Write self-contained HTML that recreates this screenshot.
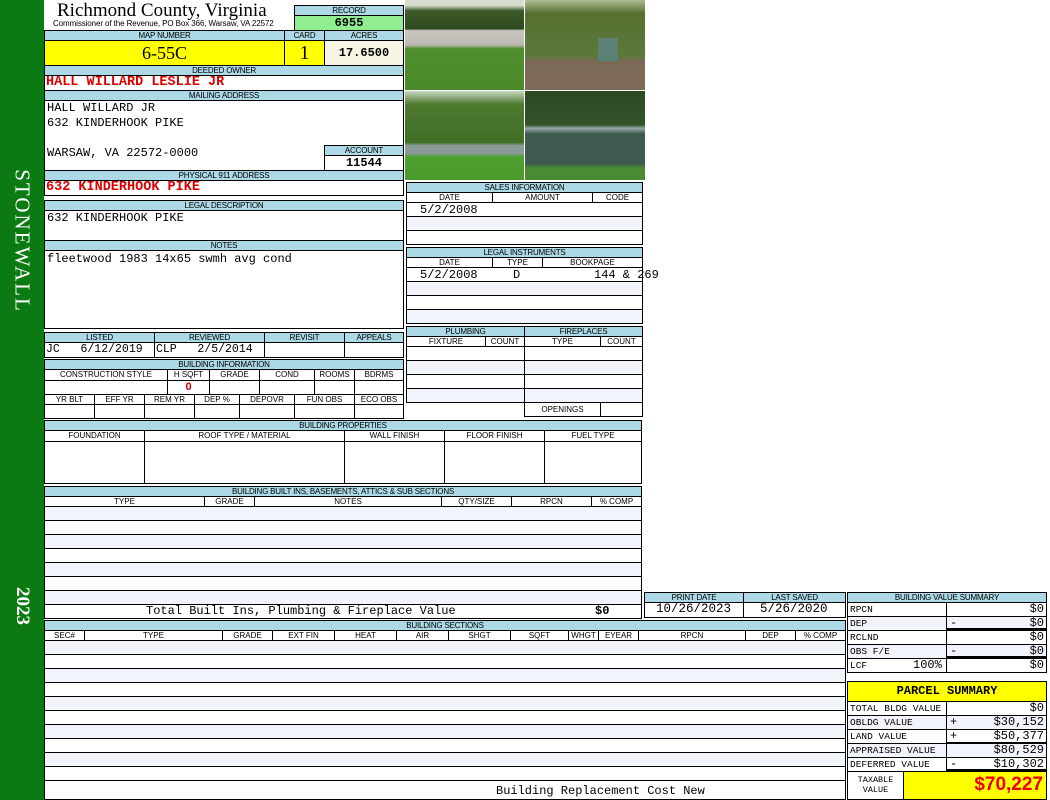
<!DOCTYPE html>
<html><head><meta charset="utf-8"><style>
*{box-sizing:border-box;margin:0;padding:0}
body{width:1050px;height:800px;background:#fff;position:relative;overflow:hidden;font-family:"Liberation Sans",sans-serif}
div{position:absolute}
.l{background:#add8e6;border:1px solid #000;font-size:8px;text-align:center;line-height:9px;color:#000;letter-spacing:-0.2px}
.c{border:1px solid #000;background:#fff;font-size:8px;text-align:center;line-height:9px}
.m{font-family:"Liberation Mono",monospace;font-size:12px;white-space:pre}
.r{border:1px solid #000;background:#fff}
.a{background:#f1f4fa;border:1px solid #000}
.red{color:#d00;font-weight:bold}
.v{font-family:"Liberation Mono",monospace;font-size:12px;white-space:pre;line-height:13px;padding:0 2px}
.s{font-size:9.5px}
</style></head><body>
<div style="left:0;top:0;width:44px;height:800px;background:#0b7a12"></div>
<div style="left:22px;top:241px;transform:translate(-50%,-50%) rotate(90deg);color:#fff;font-family:'Liberation Serif',serif;font-size:21px;white-space:nowrap;letter-spacing:2px">STONEWALL</div>
<div style="left:22px;top:606px;transform:translate(-50%,-50%) rotate(90deg);color:#fff;font-family:'Liberation Serif',serif;font-size:19px;font-weight:bold">2023</div>

<div style="left:57px;top:0px;font-family:'Liberation Serif',serif;font-size:19px;line-height:22px;white-space:nowrap">Richmond County, Virginia</div>
<div style="left:53px;top:19px;font-size:8px;white-space:nowrap;letter-spacing:-0.1px">Commissioner of the Revenue, PO Box 366, Warsaw, VA 22572</div>
<div class="l" style="left:294px;top:5px;width:110px;height:11px">RECORD</div>
<div style="left:294px;top:15px;width:110px;height:16px;background:#90ee90;border:1px solid #000;text-align:center;font-family:'Liberation Mono',monospace;font-weight:bold;font-size:12px;line-height:14px">6955</div>
<div class="l" style="left:44px;top:30px;width:241px;height:11px">MAP NUMBER</div>
<div class="l" style="left:284px;top:30px;width:41px;height:11px">CARD</div>
<div class="l" style="left:324px;top:30px;width:80px;height:11px">ACRES</div>
<div style="left:44px;top:40px;width:241px;height:26px;background:#ff0;border:1px solid #000;text-align:center;font-family:'Liberation Serif',serif;font-size:18px;line-height:24px">6-55C</div>
<div style="left:284px;top:40px;width:41px;height:26px;background:#ff0;border:1px solid #000;text-align:center;font-family:'Liberation Serif',serif;font-size:20px;line-height:24px">1</div>
<div style="left:324px;top:40px;width:80px;height:26px;background:#f6f5e3;border:1px solid #000;text-align:center;font-family:'Liberation Mono',monospace;font-weight:bold;font-size:12px;line-height:24px">17.6500</div>
<div class="l" style="left:44px;top:65px;width:360px;height:11px">DEEDED OWNER</div>
<div class="r" style="left:44px;top:75px;width:360px;height:16px"></div>
<div class="m red" style="left:46px;top:76px;font-size:13.5px;line-height:14px">HALL WILLARD LESLIE JR</div>
<div class="l" style="left:44px;top:90px;width:360px;height:11px">MAILING ADDRESS</div>
<div class="r" style="left:44px;top:100px;width:360px;height:71px"></div>
<div class="m" style="left:47px;top:101px;line-height:15px">HALL WILLARD JR
632 KINDERHOOK PIKE

WARSAW, VA 22572-0000</div>
<div class="l" style="left:324px;top:145px;width:80px;height:11px">ACCOUNT</div>
<div style="left:324px;top:155px;width:80px;height:16px;border:1px solid #000;background:#fff;text-align:center;font-family:'Liberation Mono',monospace;font-weight:bold;font-size:12px;line-height:15px">11544</div>
<div class="l" style="left:44px;top:170px;width:360px;height:11px">PHYSICAL 911 ADDRESS</div>
<div class="r" style="left:44px;top:180px;width:360px;height:16px"></div>
<div class="m red" style="left:46px;top:181px;font-size:13.5px;line-height:14px">632 KINDERHOOK PIKE</div>
<div class="l" style="left:44px;top:200px;width:360px;height:11px">LEGAL DESCRIPTION</div>
<div class="r" style="left:44px;top:210px;width:360px;height:31px"></div>
<div class="m" style="left:47px;top:211px">632 KINDERHOOK PIKE</div>
<div class="l" style="left:44px;top:240px;width:360px;height:11px">NOTES</div>
<div class="r" style="left:44px;top:250px;width:360px;height:79px"></div>
<div class="m" style="left:47px;top:252px">fleetwood 1983 14x65 swmh avg cond</div>

<div class="l" style="left:44px;top:332px;width:111px;height:11px">LISTED</div>
<div class="l" style="left:154px;top:332px;width:111px;height:11px">REVIEWED</div>
<div class="l" style="left:264px;top:332px;width:81px;height:11px">REVISIT</div>
<div class="l" style="left:344px;top:332px;width:60px;height:11px">APPEALS</div>
<div class="r" style="left:44px;top:342px;width:111px;height:16px"></div>
<div class="r" style="left:154px;top:342px;width:111px;height:16px"></div>
<div class="r" style="left:264px;top:342px;width:81px;height:16px"></div>
<div class="r" style="left:344px;top:342px;width:60px;height:16px"></div>
<div class="m" style="left:46px;top:343px;font-size:11.5px">JC   6/12/2019</div>
<div class="m" style="left:156px;top:343px;font-size:11.5px">CLP   2/5/2014</div>
<div class="l" style="left:44px;top:359px;width:360px;height:11px">BUILDING INFORMATION</div>
<div class="c" style="left:44px;top:369px;width:124px;height:12px">CONSTRUCTION STYLE</div>
<div class="c" style="left:167px;top:369px;width:43px;height:12px">H SQFT</div>
<div class="c" style="left:209px;top:369px;width:51px;height:12px">GRADE</div>
<div class="c" style="left:259px;top:369px;width:56px;height:12px">COND</div>
<div class="c" style="left:314px;top:369px;width:41px;height:12px">ROOMS</div>
<div class="c" style="left:354px;top:369px;width:50px;height:12px">BDRMS</div>
<div class="r" style="left:44px;top:380px;width:124px;height:15px"></div>
<div class="r" style="left:167px;top:380px;width:43px;height:15px;text-align:center;color:#c00;font-weight:bold;font-size:11px">0</div>
<div class="r" style="left:209px;top:380px;width:51px;height:15px"></div>
<div class="r" style="left:259px;top:380px;width:56px;height:15px"></div>
<div class="r" style="left:314px;top:380px;width:41px;height:15px"></div>
<div class="r" style="left:354px;top:380px;width:50px;height:15px"></div>
<div class="c" style="left:44px;top:394px;width:51px;height:11px">YR BLT</div>
<div class="c" style="left:94px;top:394px;width:51px;height:11px">EFF YR</div>
<div class="c" style="left:144px;top:394px;width:51px;height:11px">REM YR</div>
<div class="c" style="left:194px;top:394px;width:46px;height:11px">DEP %</div>
<div class="c" style="left:239px;top:394px;width:56px;height:11px">DEPOVR</div>
<div class="c" style="left:294px;top:394px;width:61px;height:11px">FUN OBS</div>
<div class="c" style="left:354px;top:394px;width:50px;height:11px">ECO OBS</div>
<div class="r" style="left:44px;top:404px;width:51px;height:15px"></div>
<div class="r" style="left:94px;top:404px;width:51px;height:15px"></div>
<div class="r" style="left:144px;top:404px;width:51px;height:15px"></div>
<div class="r" style="left:194px;top:404px;width:46px;height:15px"></div>
<div class="r" style="left:239px;top:404px;width:56px;height:15px"></div>
<div class="r" style="left:294px;top:404px;width:61px;height:15px"></div>
<div class="r" style="left:354px;top:404px;width:50px;height:15px"></div>

<div style="left:405px;top:0;width:119px;height:90px;background:linear-gradient(#d8ddd0 0,#d8ddd0 6%,#3d5a2a 12%,#2e4a20 32%,#c9c5c0 34%,#bdb8b2 50%,#4f8f2c 54%,#4a8a2a 100%)"></div>
<div style="left:525px;top:0;width:120px;height:90px;background:linear-gradient(#b0bc90 0,#56702f 15%,#5a7a3a 62%,#7a6a55 68%,#7d6b58 100%)"></div>
<div style="left:598px;top:38px;width:20px;height:23px;background:#5a8078"></div>
<div style="left:405px;top:91px;width:119px;height:89px;background:linear-gradient(#c8d8c0 0,#4e7a30 15%,#3f6e25 58%,#8a9a98 61%,#8a9a98 70%,#4fa030 74%,#4a9a2c 100%)"></div>
<div style="left:525px;top:91px;width:120px;height:89px;background:linear-gradient(#2e4a22 0,#34532a 38%,#9aa8a8 42%,#3e5a4e 48%,#3e5a4e 82%,#4a8a30 86%,#4a8a30 100%)"></div>

<div class="l" style="left:406px;top:182px;width:237px;height:11px">SALES INFORMATION</div>
<div class="c" style="left:406px;top:192px;width:87px;height:11px">DATE</div>
<div class="c" style="left:492px;top:192px;width:101px;height:11px">AMOUNT</div>
<div class="c" style="left:592px;top:192px;width:51px;height:11px">CODE</div>
<div class="r" style="left:406px;top:202px;width:237px;height:15px"></div>
<div class="a" style="left:406px;top:216px;width:237px;height:15px"></div>
<div class="r" style="left:406px;top:230px;width:237px;height:15px"></div>
<div class="m" style="left:420px;top:203px">5/2/2008</div>
<div class="l" style="left:406px;top:247px;width:237px;height:11px">LEGAL INSTRUMENTS</div>
<div class="c" style="left:406px;top:257px;width:87px;height:11px">DATE</div>
<div class="c" style="left:492px;top:257px;width:51px;height:11px">TYPE</div>
<div class="c" style="left:542px;top:257px;width:101px;height:11px">BOOKPAGE</div>
<div class="r" style="left:406px;top:267px;width:237px;height:15px"></div>
<div class="a" style="left:406px;top:281px;width:237px;height:15px"></div>
<div class="r" style="left:406px;top:295px;width:237px;height:15px"></div>
<div class="a" style="left:406px;top:309px;width:237px;height:15px"></div>
<div class="m" style="left:420px;top:268px">5/2/2008</div>
<div class="m" style="left:513px;top:268px">D</div>
<div class="m" style="left:594px;top:268px">144 &amp; 269</div>

<div class="l" style="left:406px;top:326px;width:119px;height:11px">PLUMBING</div>
<div class="l" style="left:524px;top:326px;width:119px;height:11px">FIREPLACES</div>
<div class="c" style="left:406px;top:336px;width:80px;height:11px">FIXTURE</div>
<div class="c" style="left:485px;top:336px;width:40px;height:11px">COUNT</div>
<div class="c" style="left:524px;top:336px;width:77px;height:11px">TYPE</div>
<div class="c" style="left:600px;top:336px;width:43px;height:11px">COUNT</div>
<div class="r" style="left:406px;top:346px;width:119px;height:15px"></div>
<div class="a" style="left:406px;top:360px;width:119px;height:15px"></div>
<div class="r" style="left:406px;top:374px;width:119px;height:15px"></div>
<div class="a" style="left:406px;top:388px;width:119px;height:15px"></div>
<div class="r" style="left:524px;top:346px;width:119px;height:15px"></div>
<div class="a" style="left:524px;top:360px;width:119px;height:15px"></div>
<div class="r" style="left:524px;top:374px;width:119px;height:15px"></div>
<div class="a" style="left:524px;top:388px;width:119px;height:15px"></div>
<div class="c" style="left:524px;top:402px;width:77px;height:15px;line-height:13px">OPENINGS</div>
<div class="r" style="left:600px;top:402px;width:43px;height:15px"></div>

<div class="l" style="left:44px;top:420px;width:598px;height:11px">BUILDING PROPERTIES</div>
<div class="c" style="left:44px;top:430px;width:101px;height:12px">FOUNDATION</div>
<div class="c" style="left:144px;top:430px;width:201px;height:12px">ROOF TYPE / MATERIAL</div>
<div class="c" style="left:344px;top:430px;width:101px;height:12px">WALL FINISH</div>
<div class="c" style="left:444px;top:430px;width:101px;height:12px">FLOOR FINISH</div>
<div class="c" style="left:544px;top:430px;width:98px;height:12px">FUEL TYPE</div>
<div class="r" style="left:44px;top:441px;width:101px;height:43px"></div>
<div class="r" style="left:144px;top:441px;width:201px;height:43px"></div>
<div class="r" style="left:344px;top:441px;width:101px;height:43px"></div>
<div class="r" style="left:444px;top:441px;width:101px;height:43px"></div>
<div class="r" style="left:544px;top:441px;width:98px;height:43px"></div>

<div class="l" style="left:44px;top:486px;width:598px;height:11px">BUILDING BUILT INS, BASEMENTS, ATTICS &amp; SUB SECTIONS</div>
<div class="c" style="left:44px;top:496px;width:161px;height:11px">TYPE</div>
<div class="c" style="left:204px;top:496px;width:51px;height:11px">GRADE</div>
<div class="c" style="left:254px;top:496px;width:188px;height:11px">NOTES</div>
<div class="c" style="left:441px;top:496px;width:71px;height:11px">QTY/SIZE</div>
<div class="c" style="left:511px;top:496px;width:81px;height:11px">RPCN</div>
<div class="c" style="left:591px;top:496px;width:51px;height:11px">% COMP</div>
<div class="a" style="left:44px;top:506px;width:598px;height:15px"></div>
<div class="r" style="left:44px;top:520px;width:598px;height:15px"></div>
<div class="a" style="left:44px;top:534px;width:598px;height:15px"></div>
<div class="r" style="left:44px;top:548px;width:598px;height:15px"></div>
<div class="a" style="left:44px;top:562px;width:598px;height:15px"></div>
<div class="r" style="left:44px;top:576px;width:598px;height:15px"></div>
<div class="a" style="left:44px;top:590px;width:598px;height:15px"></div>
<div class="r" style="left:44px;top:604px;width:598px;height:15px"></div>
<div class="m" style="left:146px;top:604px">Total Built Ins, Plumbing &amp; Fireplace Value</div>
<div class="m" style="left:595px;top:604px;font-weight:bold">$0</div>

<div class="l" style="left:644px;top:592px;width:100px;height:11px">PRINT DATE</div>
<div class="l" style="left:743px;top:592px;width:103px;height:11px">LAST SAVED</div>
<div class="r" style="left:644px;top:602px;width:100px;height:16px"></div>
<div class="r" style="left:743px;top:602px;width:103px;height:16px"></div>
<div class="m" style="left:656px;top:602px;font-size:12.5px">10/26/2023</div>
<div class="m" style="left:760px;top:602px;font-size:12.5px">5/26/2020</div>

<div class="l" style="left:44px;top:620px;width:802px;height:11px">BUILDING SECTIONS</div>
<div class="c" style="left:44px;top:630px;width:41px;height:11px">SEC#</div>
<div class="c" style="left:84px;top:630px;width:139px;height:11px">TYPE</div>
<div class="c" style="left:222px;top:630px;width:51px;height:11px">GRADE</div>
<div class="c" style="left:272px;top:630px;width:63px;height:11px">EXT FIN</div>
<div class="c" style="left:334px;top:630px;width:63px;height:11px">HEAT</div>
<div class="c" style="left:396px;top:630px;width:53px;height:11px">AIR</div>
<div class="c" style="left:448px;top:630px;width:63px;height:11px">SHGT</div>
<div class="c" style="left:510px;top:630px;width:59px;height:11px">SQFT</div>
<div class="c" style="left:568px;top:630px;width:31px;height:11px">WHGT</div>
<div class="c" style="left:598px;top:630px;width:41px;height:11px">EYEAR</div>
<div class="c" style="left:638px;top:630px;width:108px;height:11px">RPCN</div>
<div class="c" style="left:745px;top:630px;width:51px;height:11px">DEP</div>
<div class="c" style="left:795px;top:630px;width:51px;height:11px">% COMP</div>
<div class="a" style="left:44px;top:640px;width:802px;height:15px"></div>
<div class="r" style="left:44px;top:654px;width:802px;height:15px"></div>
<div class="a" style="left:44px;top:668px;width:802px;height:15px"></div>
<div class="r" style="left:44px;top:682px;width:802px;height:15px"></div>
<div class="a" style="left:44px;top:696px;width:802px;height:15px"></div>
<div class="r" style="left:44px;top:710px;width:802px;height:15px"></div>
<div class="a" style="left:44px;top:724px;width:802px;height:15px"></div>
<div class="r" style="left:44px;top:738px;width:802px;height:15px"></div>
<div class="a" style="left:44px;top:752px;width:802px;height:15px"></div>
<div class="r" style="left:44px;top:766px;width:802px;height:15px"></div>
<div class="r" style="left:44px;top:780px;width:802px;height:20px"></div>
<div class="m" style="left:496px;top:784px">Building Replacement Cost New</div>

<div class="l" style="left:847px;top:592px;width:200px;height:11px">BUILDING VALUE SUMMARY</div>
<div class="r v s" style="left:847px;top:602px;width:100px;height:15px">RPCN</div>
<div class="r v" style="left:946px;top:602px;width:101px;height:15px;text-align:right">$0</div>
<div class="a v s" style="left:847px;top:616px;width:100px;height:15px">DEP</div>
<div class="a v" style="left:946px;top:616px;width:101px;height:15px;text-align:right;border-bottom:3px solid #000">$0</div>
<div style="left:950px;top:616px;font-family:'Liberation Mono',monospace;font-size:12px">-</div>
<div class="r v s" style="left:847px;top:630px;width:100px;height:15px">RCLND</div>
<div class="r v" style="left:946px;top:630px;width:101px;height:15px;text-align:right">$0</div>
<div class="a v s" style="left:847px;top:644px;width:100px;height:15px">OBS F/E</div>
<div class="a v" style="left:946px;top:644px;width:101px;height:15px;text-align:right;border-bottom:3px solid #000">$0</div>
<div style="left:950px;top:644px;font-family:'Liberation Mono',monospace;font-size:12px">-</div>
<div class="r v s" style="left:847px;top:658px;width:100px;height:15px">LCF</div>
<div class="m" style="left:913px;top:658px;font-size:12px">100%</div>
<div class="r v" style="left:946px;top:658px;width:101px;height:15px;text-align:right">$0</div>

<div style="left:847px;top:681px;width:200px;height:21px;background:#ff0;border:1px solid #000;text-align:center;font-family:'Liberation Mono',monospace;font-weight:bold;font-size:12px;line-height:19px">PARCEL SUMMARY</div>
<div class="r v s" style="left:847px;top:701px;width:100px;height:15px">TOTAL BLDG VALUE</div>
<div class="r v" style="left:946px;top:701px;width:101px;height:15px;text-align:right">$0</div>
<div class="a v s" style="left:847px;top:715px;width:100px;height:15px">OBLDG VALUE</div>
<div class="a v" style="left:946px;top:715px;width:101px;height:15px;text-align:right">$30,152</div>
<div style="left:950px;top:715px;font-family:'Liberation Mono',monospace;font-size:12px">+</div>
<div class="r v s" style="left:847px;top:729px;width:100px;height:15px">LAND VALUE</div>
<div class="r v" style="left:946px;top:729px;width:101px;height:15px;text-align:right;border-bottom:2px solid #000">$50,377</div>
<div style="left:950px;top:729px;font-family:'Liberation Mono',monospace;font-size:12px">+</div>
<div class="a v s" style="left:847px;top:743px;width:100px;height:15px">APPRAISED VALUE</div>
<div class="a v" style="left:946px;top:743px;width:101px;height:15px;text-align:right">$80,529</div>
<div class="r v s" style="left:847px;top:757px;width:100px;height:15px">DEFERRED VALUE</div>
<div class="r v" style="left:946px;top:757px;width:101px;height:15px;text-align:right;border-bottom:3px solid #000">$10,302</div>
<div style="left:950px;top:757px;font-family:'Liberation Mono',monospace;font-size:12px">-</div>
<div class="r" style="left:847px;top:771px;width:57px;height:29px;font-family:'Liberation Mono',monospace;font-size:8.5px;text-align:center;line-height:10px;padding-top:3px">TAXABLE<br>VALUE</div>
<div style="left:903px;top:771px;width:144px;height:29px;background:#ff0;border:1px solid #000;text-align:right;color:#e00;font-weight:bold;font-size:19px;line-height:26px;padding-right:3px">$70,227</div>
</body></html>
